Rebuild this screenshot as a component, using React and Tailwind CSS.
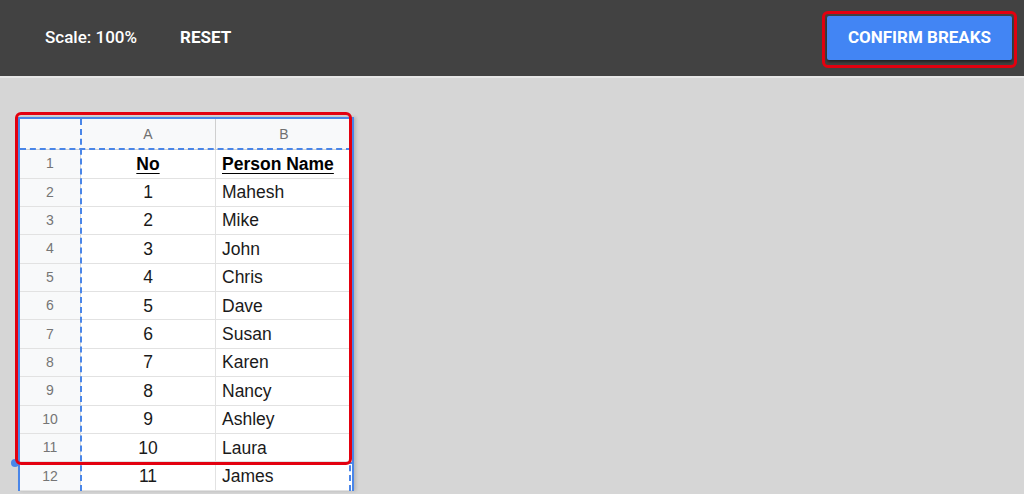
import React from "react";

const people = [
  "Mahesh",
  "Mike",
  "John",
  "Chris",
  "Dave",
  "Susan",
  "Karen",
  "Nancy",
  "Ashley",
  "Laura",
  "James",
];

export default function App() {
  return (
    <div className="relative w-[1024px] h-[494px] overflow-hidden bg-[#d6d6d6] font-['Roboto',sans-serif]">
      {/* Top bar */}
      <div className="flex items-center h-[76px] bg-[#424242] text-white border-b-2 border-[#e6e6e6] box-content">
        <span className="ml-[45px] text-[17px] font-medium">Scale: 100%</span>
        <button className="ml-[43px] text-[17px] font-bold">RESET</button>
        <div className="ml-auto mr-[7px] mt-[2px] border-[3px] border-[#e3000f] rounded-[6px] pt-[2px] pb-[5px] px-[2px]">
          <button className="h-[44px] w-[185px] bg-[#4285f4] rounded-[2px] shadow-[0_2px_3px_rgba(0,0,0,0.5)] text-[17px] font-bold">
            CONFIRM BREAKS
          </button>
        </div>
      </div>

      {/* Preview area */}
      <div className="pl-[18px] pt-[39px]">
        <div className="relative w-[336px] bg-white border-t-2 border-x-2 border-[#4a86e8] shadow-[2px_0_3px_rgba(0,0,0,0.15)]">
          {/* column header */}
          <div className="flex h-[31px] bg-[#f8f9fa] border-b border-[#d0d0d0] text-[14px] text-[#707070] font-['Liberation_Sans',sans-serif]">
            <div className="w-[61px]" />
            <div className="w-[135px] flex items-center justify-center border-r border-[#cfcfcf]">
              A
            </div>
            <div className="flex-1 flex items-center justify-center">B</div>
          </div>

          {/* rows */}
          <div className="font-['Liberation_Sans',sans-serif]">
            <div className="flex h-[28.5px] border-b border-[#e2e2e2]">
              <div className="w-[61px] flex items-center justify-center bg-[#f8f9fa] text-[14px] text-[#757575] border-r border-[#d8d8d8]">
                1
              </div>
              <div className="w-[135px] flex items-center justify-center border-r border-[#e2e2e2] text-[17.5px] font-bold underline underline-offset-[3px] text-black">
                No
              </div>
              <div className="flex-1 flex items-center pl-[6px] text-[17.5px] font-bold underline underline-offset-[3px] text-black">
                Person Name
              </div>
            </div>
            {people.map((name, i) => (
              <div key={name} className="flex h-[28.4px] border-b border-[#e2e2e2]">
                <div className="w-[61px] flex items-center justify-center bg-[#f8f9fa] text-[14px] text-[#757575] border-r border-[#d8d8d8]">
                  {i + 2}
                </div>
                <div className="w-[135px] flex items-center justify-center border-r border-[#e2e2e2] text-[17.5px] text-[#1a1a1a]">
                  {i + 1}
                </div>
                <div className="flex-1 flex items-center pl-[6px] text-[17.5px] text-[#1a1a1a]">
                  {name}
                </div>
              </div>
            ))}
          </div>

          {/* page break markers */}
          <div className="absolute left-[60px] top-0 bottom-0 border-l-2 border-dashed border-[#4a86e8]" />
          <div className="absolute left-0 right-0 top-[29px] border-t-2 border-dashed border-[#4a86e8]" />
          <div className="absolute right-[1px] top-0 bottom-0 border-l-2 border-dashed border-[#4a86e8]" />
          <div className="absolute left-0 right-0 top-[343px] h-[2px] bg-[#4a86e8]" />
          <div className="absolute left-[-9px] top-[340px] w-[8px] h-[8px] rounded-full bg-[#4a86e8]" />
        </div>
      </div>

      {/* highlight annotation */}
      <div className="absolute left-[15px] top-[112px] w-[337px] h-[353px] border-[3px] border-[#e3000f] rounded-[6px]" />
    </div>
  );
}
